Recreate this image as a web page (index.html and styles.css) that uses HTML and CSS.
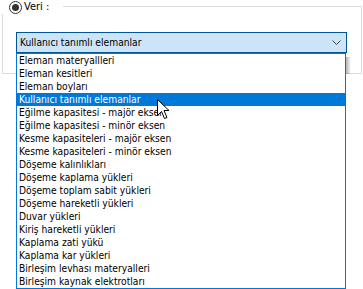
FILE: index.html
```html
<!DOCTYPE html>
<html>
<head>
<meta charset="utf-8">
<link rel="stylesheet" href="styles.css">
</head>
<body>
<div class="page">
  <div class="group">
    <div class="legend">
      <span class="radio"><span class="dot"></span></span>
      <span class="legend-text">Veri :</span>
    </div>
    <div class="combo">
      <div class="combo-head">
        <span class="combo-text">Kullanıcı tanımlı elemanlar</span>
        <svg class="chev" width="9" height="5" viewBox="0 0 9 5"><path d="M0.5 0.5 L4.5 4.5 L8.5 0.5" fill="none" stroke="#444" stroke-width="1"/></svg>
      </div>
      <div class="list">
        <div class="shadow"></div>
        <div class="item">Eleman materyallleri</div>
        <div class="item">Eleman kesitleri</div>
        <div class="item">Eleman boyları</div>
        <div class="item sel">Kullanıcı tanımlı elemanlar</div>
        <div class="item">Eğilme kapasitesi - majör eksen</div>
        <div class="item">Eğilme kapasitesi - minör eksen</div>
        <div class="item">Kesme kapasiteleri - majör eksen</div>
        <div class="item">Kesme kapasiteleri - minör eksen</div>
        <div class="item">Döşeme kalınlıkları</div>
        <div class="item">Döşeme kaplama yükleri</div>
        <div class="item">Döşeme toplam sabit yükleri</div>
        <div class="item">Döşeme hareketli yükleri</div>
        <div class="item">Duvar yükleri</div>
        <div class="item">Kiriş hareketli yükleri</div>
        <div class="item">Kaplama zati yükü</div>
        <div class="item">Kaplama kar yükleri</div>
        <div class="item">Birleşim levhası materyalleri</div>
        <div class="item">Birleşim kaynak elektrotları</div>
      </div>
    </div>
  </div>
  <svg class="cursor" width="13" height="21" viewBox="0 0 13 21"><path d="M0.5 0.5 L0.5 16.5 L4.5 12.5 L7.5 19.5 L10 18.5 L7 11.5 L12 11.5 Z" fill="#fff" stroke="#000" stroke-width="1" stroke-linejoin="miter"/></svg>
</div>
</body>
</html>
```
FILE: styles.css
```css
html, body {
  margin: 0;
  padding: 0;
  background: #ffffff;
}
.page {
  position: relative;
  width: 363px;
  height: 289px;
  overflow: hidden;
  font-family: "DejaVu Sans Condensed", "Liberation Sans", Arial, sans-serif;
  color: #000;
}
.group {
  position: relative;
  margin: 6px 0 0 2px;
  width: 358px;
  height: 66px;
  border: 1px solid #dcdcdc;
}
.legend {
  position: absolute;
  left: -3px;
  top: -7px;
  height: 14px;
  padding-right: 14px;
  display: flex;
  align-items: center;
  gap: 2px;
  background: #ffffff;
  padding-left: 9px;
}
.radio {
  width: 11px;
  height: 11px;
  border: 1px solid #333;
  border-radius: 50%;
  display: flex;
  align-items: center;
  justify-content: center;
}
.dot {
  width: 7px;
  height: 7px;
  border-radius: 50%;
  background: #333;
}
.legend-text {
  font-size: 11px;
  line-height: 14px;
}
.combo {
  position: relative;
  margin: 25px 0 0 13px;
  width: 330px;
}
.combo-head {
  height: 19px;
  border: 1px solid #005499;
  background: #cce4f7;
  display: flex;
  align-items: center;
  justify-content: space-between;
  padding: 0 5px 0 3px;
  width: 321px;
}
.combo-text {
  font-size: 10.2px;
}
.chev {
  display: block;
}
.list {
  position: absolute;
  left: 0;
  top: 21px;
  width: 328px;
  border: 1px solid #0078d7;
  background: #fff;
  z-index: 2;
}
.shadow {
  position: absolute;
  right: -6px;
  top: 3px;
  width: 5px;
  height: 17px;
  background: linear-gradient(to right, rgba(0,0,0,0.3), rgba(0,0,0,0));
}
.item {
  height: 13px;
  line-height: 13px;
  font-size: 10.2px;
  padding-left: 2px;
  white-space: nowrap;
}
.item.sel {
  background: #0078d7;
  color: #fff;
}
.cursor {
  position: absolute;
  left: 157px;
  top: 99px;
  z-index: 5;
}
```
